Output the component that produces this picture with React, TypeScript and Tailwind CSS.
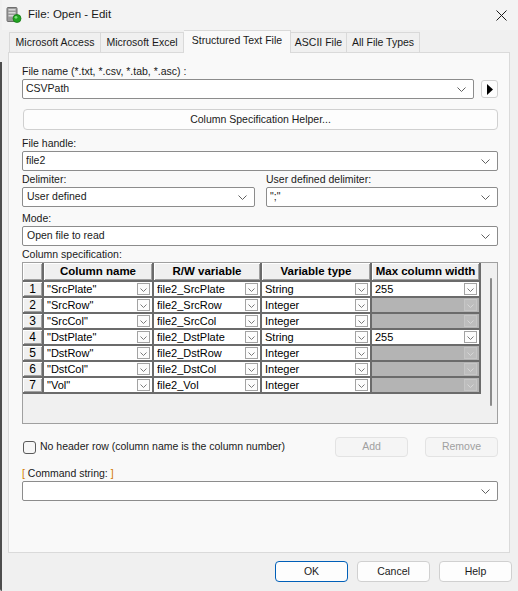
import React from "react";

const rows = [
  { n: "1", name: '"SrcPlate"', v: "file2_SrcPlate", t: "String", w: "255" },
  { n: "2", name: '"SrcRow"', v: "file2_SrcRow", t: "Integer", w: null },
  { n: "3", name: '"SrcCol"', v: "file2_SrcCol", t: "Integer", w: null },
  { n: "4", name: '"DstPlate"', v: "file2_DstPlate", t: "String", w: "255" },
  { n: "5", name: '"DstRow"', v: "file2_DstRow", t: "Integer", w: null },
  { n: "6", name: '"DstCol"', v: "file2_DstCol", t: "Integer", w: null },
  { n: "7", name: '"Vol"', v: "file2_Vol", t: "Integer", w: null },
];

function Chevron() {
  return (
    <svg width="9" height="5" viewBox="0 0 9 5" className="shrink-0">
      <path d="M0.5 0.5 L4.5 4.5 L8.5 0.5" fill="none" stroke="#606060" strokeWidth="1" />
    </svg>
  );
}

function Combo({ value, className = "" }: { value: string; className?: string }) {
  return (
    <div className={"h-[20px] bg-white border border-[#8c8c8c] rounded-[2px] flex items-center pl-[3px] pr-[7px] " + className}>
      <span className="flex-1 truncate text-[#1a1a1a]">{value}</span>
      <Chevron />
    </div>
  );
}

function Label({ children, className = "" }: { children: React.ReactNode; className?: string }) {
  return <div className={"h-[16px] leading-[16px] text-[#1a1a1a] whitespace-nowrap " + className}>{children}</div>;
}

function CellDrop({ off }: { off?: boolean }) {
  return (
    <div
      className={
        "w-[13px] h-[12px] mr-[2px] shrink-0 flex items-end justify-center pb-[2px] border " +
        (off ? "border-[#c6c6c6] bg-[#bdbdbd]" : "border-[#a3a3a3] bg-[#fcfcfc]")
      }
    >
      <svg width="7" height="4" viewBox="0 0 7 4">
        <path d="M0.5 0.5 L3.5 3.5 L6.5 0.5" fill="none" stroke={off ? "#d6d6d6" : "#7a7a7a"} strokeWidth="1" />
      </svg>
    </div>
  );
}

function Cell({ text, off }: { text?: string | null; off?: boolean }) {
  return (
    <div className={"h-[14px] flex items-center pl-[3px] " + (off ? "bg-[#b4b4b4]" : "bg-white")}>
      <span className="flex-1 truncate text-[11px] leading-[14px] text-black">{text}</span>
      <CellDrop off={off} />
    </div>
  );
}

const raised = "bg-[#f0f0f0] shadow-[inset_1px_1px_0_#ffffff,inset_-1px_-1px_0_#a0a0a0]";

function Button({ children, className = "", disabled }: { children: React.ReactNode; className?: string; disabled?: boolean }) {
  return (
    <div
      className={
        "h-[20px] rounded-[4px] border flex items-center justify-center " +
        (disabled ? "border-[#e3e3e3] bg-[#f5f5f5] text-[#a0a0a0] " : "border-[#d0d0d0] bg-[#fdfdfd] text-[#1a1a1a] ") +
        className
      }
    >
      {children}
    </div>
  );
}

const tab = "h-[20px] flex items-center justify-center whitespace-nowrap border border-b-0 border-[#d9d9d9] bg-[#f0f0f0] text-[#1a1a1a]";

export default function App() {
  return (
    <div className="w-[518px] h-[591px] flex overflow-hidden font-['Liberation_Sans',Arial,sans-serif] text-[10.5px] bg-[#f0f0f0]">
      <div className="w-[2px] shrink-0 flex flex-col">
        <div className="h-[62px] bg-[#f0f0f0]" />
        <div className="flex-1 bg-[#4d4d4d] rounded-bl-[6px]" />
      </div>

      <div className="flex-1 flex flex-col">
        {/* title bar */}
        <div className="h-[30px] bg-[#f3f3f3] flex items-center pl-[4px] pr-[8px]">
          <svg width="16" height="16" viewBox="0 0 16 16">
            <rect x="1" y="0.5" width="10" height="14" rx="1" fill="#9a9a9a" stroke="#6e6e6e" />
            <rect x="2.5" y="2" width="7" height="1.5" fill="#d8d8d8" />
            <rect x="2.5" y="5" width="7" height="1.5" fill="#d8d8d8" />
            <rect x="2.5" y="8" width="7" height="1.5" fill="#d8d8d8" />
            <circle cx="11" cy="11.5" r="4" fill="#22a422" stroke="#157a15" strokeWidth="0.8" />
            <circle cx="10" cy="10.3" r="1.4" fill="#7ee07e" />
          </svg>
          <span className="ml-[6px] text-[11.5px] text-[#1a1a1a]">File: Open - Edit</span>
          <div className="flex-1" />
          <svg width="11" height="11" viewBox="0 0 11 11" className="mr-[3px]">
            <path d="M0.5 0.5 L10.5 10.5 M10.5 0.5 L0.5 10.5" stroke="#1a1a1a" strokeWidth="1" />
          </svg>
        </div>

        {/* tabs */}
        <div className="h-[22px] flex items-end pl-[7px] relative z-10">
          <div className={tab + " w-[92px]"}>Microsoft Access</div>
          <div className={tab + " border-l-0 w-[83px]"}>Microsoft Excel</div>
          <div className="h-[23px] -mb-[1px] pb-[2px] flex items-center justify-center whitespace-nowrap border border-b-0 border-l-0 border-[#d9d9d9] bg-[#f9f9f9] text-[#1a1a1a] w-[107px]">
            Structured Text File
          </div>
          <div className={tab + " border-l-0 w-[56px]"}>ASCII File</div>
          <div className={tab + " border-l-0 w-[73px]"}>All File Types</div>
        </div>

        {/* panel */}
        <div className="ml-[6px] w-[502px] h-[501px] border border-[#dadada] bg-[#f9f9f9] pl-[13px] pr-[11px] pt-[10px] flex flex-col">
          <Label>File name (*.txt, *.csv, *.tab, *.asc) :</Label>
          <div className="flex items-center">
            <Combo value="CSVPath" className="w-[453px]" />
            <div className="ml-[7px] w-[17px] h-[18px] rounded-[3px] border border-[#d0d0d0] bg-[#fdfdfd] flex items-center justify-center">
              <svg width="6" height="11" viewBox="0 0 6 11">
                <path d="M0 0 L6 5.5 L0 11 Z" fill="#000" />
              </svg>
            </div>
          </div>

          <Button className="mt-[10px] h-[21px] ml-[1px] w-[475px]">Column Specification Helper...</Button>

          <Label className="mt-[5px]">File handle:</Label>
          <Combo value="file2" />

          <div className="flex gap-[11px]">
            <div className="w-[233px]">
              <Label>Delimiter:</Label>
              <Combo value="User defined" className="pl-[4px]" />
            </div>
            <div className="flex-1">
              <Label>User defined delimiter:</Label>
              <Combo value={'";"'} />
            </div>
          </div>

          <Label className="mt-[3px]">Mode:</Label>
          <Combo value="Open file to read" className="pl-[4px]" />

          <Label>Column specification:</Label>
          <div className="h-[162px] border border-[#a0a0a0] bg-[#f0f0f0] flex items-start">
            <div className="grid grid-cols-[19px_108px_106px_108px_107px] gap-[2px] bg-[#6b6b6b] pr-[2px] pb-[2px]">
              <div className={"h-[17px] " + raised} />
              {["Column name", "R/W variable", "Variable type", "Max column width"].map((h) => (
                <div key={h} className={"h-[17px] flex items-center justify-center whitespace-nowrap font-bold text-[11.5px] text-black " + raised}>
                  {h}
                </div>
              ))}
              {rows.map((r) => (
                <React.Fragment key={r.n}>
                  <div className={"h-[14px] flex items-center justify-center text-[12px] text-black leading-[14px] " + raised}>{r.n}</div>
                  <Cell text={r.name} />
                  <Cell text={r.v} />
                  <Cell text={r.t} />
                  <Cell text={r.w} off={!r.w} />
                </React.Fragment>
              ))}
            </div>
            <div className="ml-[9px] mt-[15px] w-[2px] h-[128px] bg-[#8a8a8a] rounded-full" />
          </div>

          <div className="mt-[13px] h-[20px] flex items-center">
            <div className="ml-[1px] w-[13px] h-[13px] rounded-[3px] border border-[#5a5a5a] bg-[#f6f6f6]" />
            <span className="ml-[4px] text-[#1a1a1a] whitespace-nowrap">No header row (column name is the column number)</span>
            <div className="flex-1" />
            <Button disabled className="w-[73px]">Add</Button>
            <Button disabled className="ml-[17px] w-[73px]">Remove</Button>
          </div>

          <Label className="mt-[8px]">
            <span className="text-[#d27a00]">[</span> Command string: <span className="text-[#d27a00]">]</span>
          </Label>
          <Combo value="" />
        </div>

        {/* bottom buttons */}
        <div className="mt-[8px] flex justify-end gap-[9px] pr-[6px]">
          <div className="w-[73px] h-[21px] rounded-[4px] border border-[#005fb8] bg-[#fdfdfd] flex items-center justify-center text-[#1a1a1a]">OK</div>
          <Button className="w-[73px] h-[21px]">Cancel</Button>
          <Button className="w-[73px] h-[21px]">Help</Button>
        </div>
      </div>
    </div>
  );
}
